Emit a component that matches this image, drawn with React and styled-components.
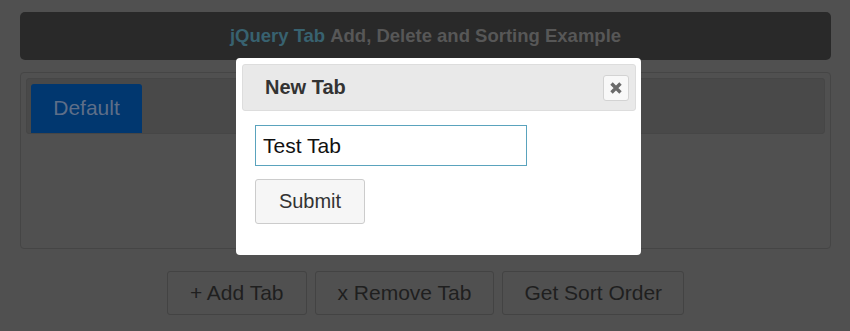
import React from 'react';
import styled, { createGlobalStyle } from 'styled-components';

const Global = createGlobalStyle`
  html, body {
    margin: 0;
    padding: 0;
    background: #505050;
    font-family: "Liberation Sans", Arial, sans-serif;
  }
`;

const Page = styled.div`
  position: relative;
  width: 850px;
  height: 331px;
  box-sizing: border-box;
  padding: 12px 19px 0 20px;
  background: #505050;
  overflow: hidden;
`;

const HeaderBar = styled.div`
  height: 48px;
  border-radius: 5px;
  background: #292929;
  display: flex;
  align-items: center;
  justify-content: center;
  font-size: 18.5px;
  font-weight: bold;
  color: #575757;
`;

const Accent = styled.span`
  color: #386270;
  margin-right: 5px;
`;

const TabsBox = styled.div`
  margin-top: 12px;
  height: 177px;
  box-sizing: border-box;
  border: 1px solid #454545;
  border-radius: 4px;
  padding: 5px;
`;

const TabNav = styled.div`
  height: 56px;
  box-sizing: border-box;
  background: #494949;
  border: 1px solid #464646;
  border-radius: 3px;
  padding: 6px 0 0 4px;
  display: flex;
  align-items: flex-end;
`;

const Tab = styled.div`
  width: 111px;
  height: 49px;
  box-sizing: border-box;
  background: ${p => (p.$active ? '#01376f' : '#4b4b4b')};
  border-radius: 3px 3px 0 0;
  color: #5e6e88;
  font-size: 21px;
  display: flex;
  align-items: center;
  justify-content: center;
  padding-bottom: 2px;
`;

const Actions = styled.div`
  margin-top: 22px;
  display: flex;
  justify-content: center;
  gap: 8px;
`;

const ActionButton = styled.button`
  height: 44px;
  box-sizing: border-box;
  padding: 0 ${p => p.$pad || 22}px;
  border: 1px solid #434343;
  border-radius: 3px;
  background: #505050;
  color: #1f1f1f;
  font-family: "Liberation Sans", Arial, sans-serif;
  font-size: 21px;
`;

const Dialog = styled.div`
  position: absolute;
  left: 236px;
  top: 58px;
  width: 405px;
  height: 197px;
  box-sizing: border-box;
  background: #fff;
  border-radius: 4px;
  padding: 6px 5px 0 6px;
`;

const DialogTitle = styled.div`
  height: 47px;
  box-sizing: border-box;
  background: #e9e9e9;
  border: 1px solid #dddddd;
  border-radius: 3px;
  display: flex;
  align-items: center;
  justify-content: space-between;
  padding: 0 6px 0 22px;
  font-size: 20px;
  font-weight: bold;
  color: #333;
`;

const CloseButton = styled.button`
  width: 26px;
  height: 26px;
  box-sizing: border-box;
  border: 1px solid #d3d3d3;
  border-radius: 3px;
  background: #f8f8f8;
  display: flex;
  align-items: center;
  justify-content: center;
  padding: 0;
`;

const DialogBody = styled.div`
  padding: 14px 0 0 13px;
  display: flex;
  flex-direction: column;
  align-items: flex-start;
  gap: 13px;
`;

const TextInput = styled.input`
  width: 272px;
  height: 41px;
  box-sizing: border-box;
  border: 1px solid #5aa3bd;
  padding: 0 7px;
  font-family: "Liberation Sans", Arial, sans-serif;
  font-size: 21px;
  color: #111;
  outline: none;
`;

const SubmitButton = styled.button`
  width: 110px;
  height: 45px;
  box-sizing: border-box;
  border: 1px solid #cccccc;
  border-radius: 3px;
  background: #f6f6f6;
  color: #333;
  font-family: "Liberation Sans", Arial, sans-serif;
  font-size: 20px;
`;

const CloseIcon = () => (
  <svg width="14" height="14" viewBox="0 0 14 14">
    <path d="M2.5 2.5 L11.5 11.5 M11.5 2.5 L2.5 11.5" stroke="#6a6a6a" strokeWidth="3.4" />
  </svg>
);

export default function App() {
  return (
    <>
      <Global />
      <Page>
        <HeaderBar>
          <Accent>jQuery Tab</Accent> Add, Delete and Sorting Example
        </HeaderBar>
        <TabsBox>
          <TabNav>
            <Tab $active>Default</Tab>
          </TabNav>
        </TabsBox>
        <Actions>
          <ActionButton>+ Add Tab</ActionButton>
          <ActionButton>x Remove Tab</ActionButton>
          <ActionButton $pad={21}>Get Sort Order</ActionButton>
        </Actions>
        <Dialog>
          <DialogTitle>
            New Tab
            <CloseButton aria-label="close">
              <CloseIcon />
            </CloseButton>
          </DialogTitle>
          <DialogBody>
            <TextInput defaultValue="Test Tab" />
            <SubmitButton>Submit</SubmitButton>
          </DialogBody>
        </Dialog>
      </Page>
    </>
  );
}
